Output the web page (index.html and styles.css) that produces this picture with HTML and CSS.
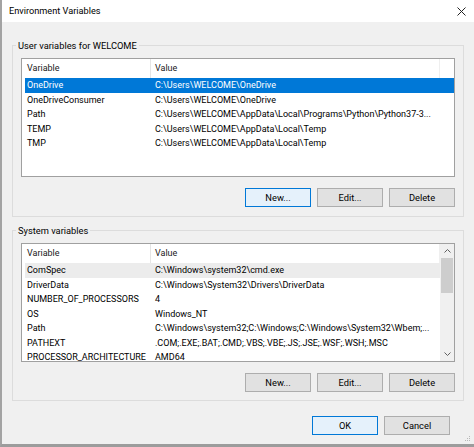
FILE: index.html
```html
<!DOCTYPE html>
<html>
<head>
<meta charset="utf-8">
<title>Environment Variables</title>
<link rel="stylesheet" href="styles.css">
</head>
<body>
<div class="window">
  <div class="titlebar">
    <span class="title">Environment Variables</span>
    <svg class="close" width="9" height="9" viewBox="0 0 9 9"><path d="M0.5 0.5 L8.5 8.5 M8.5 0.5 L0.5 8.5" stroke="#222" stroke-width="1" fill="none"/></svg>
  </div>
  <div class="body">
    <section class="group user">
      <div class="group-label">User variables for WELCOME</div>
      <div class="list">
        <div class="table">
          <div class="row head"><span>Variable</span><span>Value</span></div>
          <div class="row selected"><span>OneDrive</span><span>C:\Users\WELCOME\OneDrive</span></div>
          <div class="row"><span>OneDriveConsumer</span><span>C:\Users\WELCOME\OneDrive</span></div>
          <div class="row"><span>Path</span><span>C:\Users\WELCOME\AppData\Local\Programs\Python\Python37-3...</span></div>
          <div class="row"><span>TEMP</span><span>C:\Users\WELCOME\AppData\Local\Temp</span></div>
          <div class="row"><span>TMP</span><span>C:\Users\WELCOME\AppData\Local\Temp</span></div>
        </div>
      </div>
      <div class="buttons">
        <button class="btn focus">New...</button>
        <button class="btn">Edit...</button>
        <button class="btn">Delete</button>
      </div>
    </section>
    <section class="group sys">
      <div class="group-label">System variables</div>
      <div class="list">
        <div class="table">
          <div class="row head"><span>Variable</span><span>Value</span></div>
          <div class="row hot"><span>ComSpec</span><span>C:\Windows\system32\cmd.exe</span></div>
          <div class="row"><span>DriverData</span><span>C:\Windows\System32\Drivers\DriverData</span></div>
          <div class="row"><span>NUMBER_OF_PROCESSORS</span><span>4</span></div>
          <div class="row"><span>OS</span><span>Windows_NT</span></div>
          <div class="row"><span>Path</span><span>C:\Windows\system32;C:\Windows;C:\Windows\System32\Wbem;...</span></div>
          <div class="row"><span>PATHEXT</span><span>.COM;.EXE;.BAT;.CMD;.VBS;.VBE;.JS;.JSE;.WSF;.WSH;.MSC</span></div>
          <div class="row"><span>PROCESSOR_ARCHITECTURE</span><span>AMD64</span></div>
        </div>
        <div class="scrollbar">
          <div class="arrow"><svg width="7" height="4" viewBox="0 0 7 4"><path d="M0.5 3.5 L3.5 0.5 L6.5 3.5" stroke="#606060" fill="none"/></svg></div>
          <div class="thumb"></div>
          <div class="track"></div>
          <div class="arrow"><svg width="7" height="4" viewBox="0 0 7 4"><path d="M0.5 0.5 L3.5 3.5 L6.5 0.5" stroke="#606060" fill="none"/></svg></div>
        </div>
      </div>
      <div class="buttons">
        <button class="btn">New...</button>
        <button class="btn">Edit...</button>
        <button class="btn">Delete</button>
      </div>
    </section>
    <div class="footer">
      <button class="btn focus">OK</button>
      <button class="btn">Cancel</button>
    </div>
  </div>
  <svg class="grip" width="7" height="7" viewBox="0 0 7 7"><g fill="#b8b8b8"><rect x="5" y="1" width="1" height="1"/><rect x="3" y="3" width="1" height="1"/><rect x="5" y="3" width="1" height="1"/><rect x="1" y="5" width="1" height="1"/><rect x="3" y="5" width="1" height="1"/><rect x="5" y="5" width="1" height="1"/></g></svg>
</div>
</body>
</html>
```
FILE: styles.css
```css
html, body {
  margin: 0;
  padding: 0;
  background: #f0f0f0;
}

.window {
  position: relative;
  width: 474px;
  height: 447px;
  box-sizing: border-box;
  border-left: 2px solid #a3a3a3;
  border-bottom: 3px solid #9c9c9c;
  background: #f0f0f0;
  display: flex;
  flex-direction: column;
  font-family: Roboto, "Liberation Sans", sans-serif;
  font-size: 9px;
  color: #000;
  overflow: hidden;
}

.titlebar {
  flex: none;
  height: 22px;
  background: #fff;
  display: flex;
  align-items: center;
  justify-content: space-between;
  padding: 0 8px 0 7px;
}

.title {
  line-height: 22px;
  font-size: 9.2px;
}

.close {
  display: block;
}

.body {
  flex: 1;
  display: flex;
  flex-direction: column;
  padding: 23px 10px 0;
}

.group {
  border: 1px solid #dcdcdc;
  padding: 0 8px 9px;
}

.group.sys {
  margin-top: 13px;
  padding-bottom: 8px;
}

.group-label {
  width: max-content;
  height: 13px;
  line-height: 13px;
  margin: -7px 0 0 -5px;
  padding: 0 2px;
  background: #f0f0f0;
  font-size: 9.3px;
}

.list {
  margin-top: 6px;
  height: 119px;
  box-sizing: border-box;
  border: 1px solid #a0a0a0;
  background: #fff;
  display: flex;
  overflow: hidden;
}

.table {
  flex: 1;
  padding-left: 3px;
}

.row {
  display: grid;
  grid-template-columns: 126px 289px;
  height: 14.5px;
  line-height: 14.5px;
  white-space: nowrap;
}

.row span {
  box-sizing: border-box;
  overflow: hidden;
  padding-left: 2px;
}

.row span + span {
  padding-left: 4px;
}

.row.head {
  height: 19px;
  line-height: 19px;
  color: #1a1a1a;
}

.row.head span:first-child {
  border-right: 1px solid #e5e5e5;
}

.row.head span:last-child {
  border-right: 1px solid #efefef;
}

.row.selected {
  background: #0078d7;
  color: #fff;
}

.row.hot {
  background: #ececec;
}

.scrollbar {
  flex: none;
  width: 14px;
  background: #f0f0f0;
  display: flex;
  flex-direction: column;
}

.arrow {
  height: 14px;
  display: flex;
  align-items: center;
  justify-content: center;
}

.arrow svg {
  display: block;
}

.thumb {
  height: 35px;
  margin: 0 1px;
  background: #cdcdcd;
}

.track {
  flex: 1;
}

.buttons {
  display: flex;
  justify-content: flex-end;
  gap: 6px;
  margin-top: 11px;
}

.btn {
  width: 66px;
  height: 19px;
  box-sizing: border-box;
  margin: 0;
  padding: 0;
  border: 1px solid #adadad;
  background: #e1e1e1;
  font: inherit;
  font-size: 9.3px;
  color: #000;
}

.btn.focus {
  border-color: #0078d7;
  background: #e5f1fb;
}

.footer {
  display: flex;
  justify-content: flex-end;
  gap: 6px;
  margin-top: 15px;
  padding-right: 14px;
}

.grip {
  position: absolute;
  right: 3px;
  bottom: 2px;
  display: block;
}
```
